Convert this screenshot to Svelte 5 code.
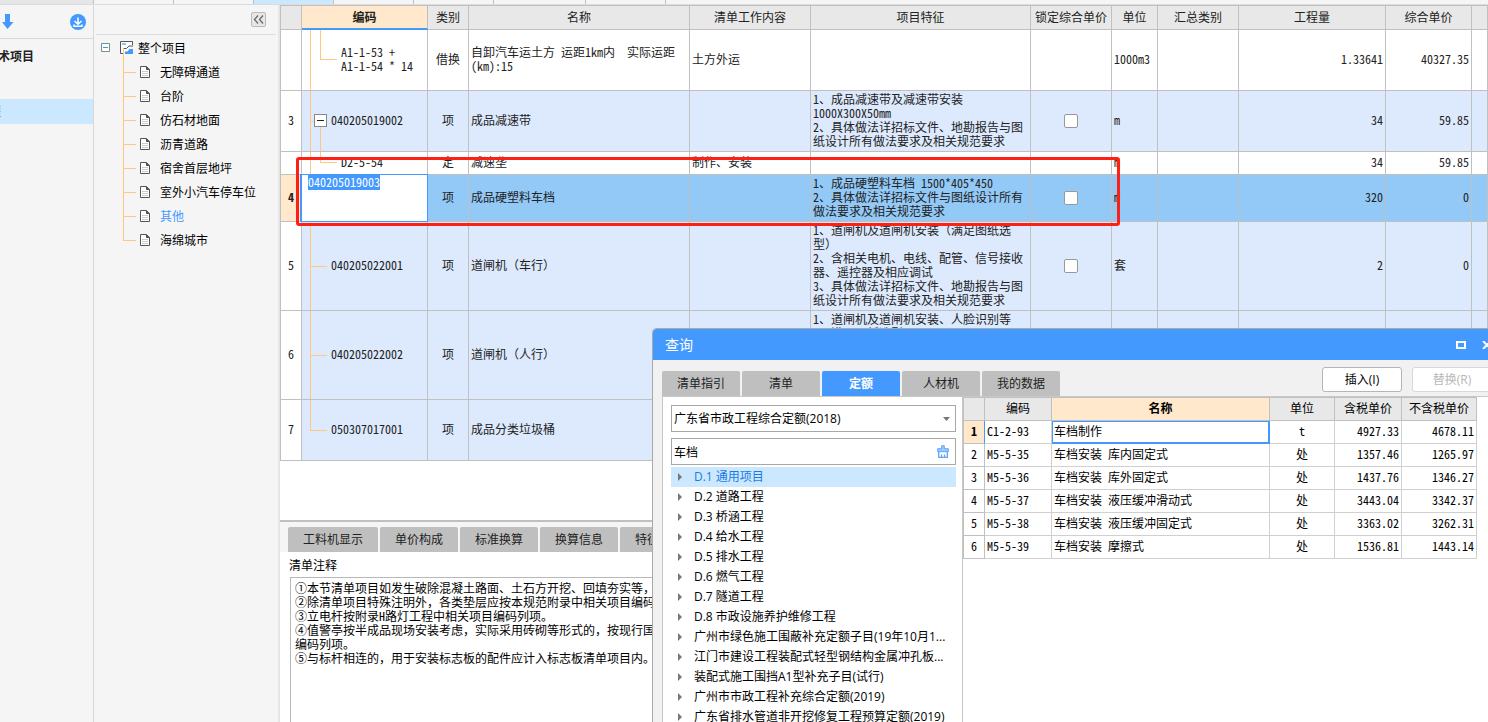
<script lang="ts">
	import { onMount } from 'svelte';

	type Row = {
		no: string;
		code: string;
		kind: string;
		name: string;
		work?: string;
		feature?: string;
		check?: boolean;
		unit?: string;
		qty?: string;
		price?: string;
		style: string;
	};

	const sections = ['无障碍通道', '台阶', '仿石材地面', '沥青道路', '宿舍首层地坪', '室外小汽车停车位', '其他', '海绵城市'];
	const columns = ['类别', '名称', '清单工作内容', '项目特征', '锁定综合单价', '单位', '汇总类别', '工程量', '综合单价', ''];

	const rows: Row[] = [
		{ no: '', code: 'A1-1-53 +\nA1-1-54 * 14', kind: '借换', name: '自卸汽车运土方 运距1km内  实际运距\n(km):15', work: '土方外运', unit: '1000m3', qty: '1.33641', price: '40327.35', style: 'sub h61' },
		{ no: '3', code: '040205019002', kind: '项', name: '成品减速带', feature: '1、成品减速带及减速带安装\n1000X300X50mm\n2、具体做法详招标文件、地勘报告与图\n纸设计所有做法要求及相关规范要求', check: true, unit: 'm', qty: '34', price: '59.85', style: 'item parent h61' },
		{ no: '', code: 'D2-5-54', kind: '定', name: '减速垄', work: '制作、安装', unit: 'm', qty: '34', price: '59.85', style: 'sub h23' },
		{ no: '4', code: '040205019003', kind: '项', name: '成品硬塑料车档', feature: '1、成品硬塑料车档 1500*405*450\n2、具体做法详招标文件与图纸设计所有\n做法要求及相关规范要求', check: true, unit: 'm', qty: '320', price: '0', style: 'item active h47' },
		{ no: '5', code: '040205022001', kind: '项', name: '道闸机（车行）', feature: '1、道闸机及道闸机安装（满足图纸选\n型）\n2、含相关电机、电线、配管、信号接收\n器、遥控器及相应调试\n3、具体做法详招标文件、地勘报告与图\n纸设计所有做法要求及相关规范要求', check: true, unit: '套', qty: '2', price: '0', style: 'item h89' },
		{ no: '6', code: '040205022002', kind: '项', name: '道闸机（人行）', feature: '1、道闸机及道闸机安装、人脸识别等\n2、满足图纸选型', style: 'item top h89' },
		{ no: '7', code: '050307017001', kind: '项', name: '成品分类垃圾桶', style: 'item last h61' }
	];

	const detailTabs = ['工料机显示', '单价构成', '标准换算', '换算信息', '特征及内容'];
	const notes = [
		'①本节清单项目如发生破除混凝土路面、土石方开挖、回填夯实等，',
		'②除清单项目特殊注明外，各类垫层应按本规范附录中相关项目编码列项。',
		'③立电杆按附录H路灯工程中相关项目编码列项。',
		'④值警亭按半成品现场安装考虑，实际采用砖砌等形式的，按现行国家',
		'编码列项。',
		'⑤与标杆相连的，用于安装标志板的配件应计入标志板清单项目内。'
	].join('\n');

	const queryTabs = ['清单指引', '清单', '定额', '人材机', '我的数据'];
	const chapters = [
		'D.1 通用项目',
		'D.2 道路工程',
		'D.3 桥涵工程',
		'D.4 给水工程',
		'D.5 排水工程',
		'D.6 燃气工程',
		'D.7 隧道工程',
		'D.8 市政设施养护维修工程',
		'广州市绿色施工围蔽补充定额子目(19年10月1...',
		'江门市建设工程装配式轻型钢结构金属冲孔板...',
		'装配式施工围挡A1型补充子目(试行)',
		'广州市市政工程补充综合定额(2019)',
		'广东省排水管道非开挖修复工程预算定额(2019)'
	];
	const quotas = [
		['C1-2-93', '车档制作', 't', '4927.33', '4678.11'],
		['M5-5-35', '车档安装 库内固定式', '处', '1357.46', '1265.97'],
		['M5-5-36', '车档安装 库外固定式', '处', '1437.76', '1346.27'],
		['M5-5-37', '车档安装 液压缓冲滑动式', '处', '3443.04', '3342.37'],
		['M5-5-38', '车档安装 液压缓冲固定式', '处', '3363.02', '3262.31'],
		['M5-5-39', '车档安装 摩擦式', '处', '1536.81', '1443.14']
	];

	let keyword = $state('车档');
	let activeCode = $state('040205019003');
	let queryTab = $state('定额');

	onMount(() => {
		const editor = document.querySelector<HTMLTextAreaElement>('#code-editor');
		editor?.focus();
		editor?.select();
	});
</script>

<div class="app">
	<div class="strip">
		<span class="pad"></span>
		<span class="w80"></span><span class="w80"></span><span class="w80 on"></span><span class="w80"></span>
		<span class="w80"></span><span class="w92"></span><span class="w80"></span>
	</div>

	<aside class="projects">
		<div class="tools">
			<button class="icon-btn" aria-label="下移">
				<svg width="12" height="16" viewBox="0 0 12 16"><path d="M3 0h5v8h3.500L5.500 15 0 8h3z" fill="#4499ff" /></svg>
			</button>
			<button class="icon-btn" aria-label="下载">
				<svg width="16" height="16" viewBox="0 0 16 16">
					<circle cx="8" cy="8" r="8" fill="#4499ff" />
					<path d="M8 3.500v6.500M4.500 7L8 10.300 11.500 7M4 10.500v1.700h8v-1.700" fill="none" stroke="#fff" stroke-width="1.500" />
				</svg>
			</button>
		</div>
		<h2>术项目</h2>
		<p class="current"><span>程</span></p>
	</aside>

	<nav class="tree">
		<div class="tree-head">
			<button class="collapse" aria-label="收起">
				<svg width="11" height="9" viewBox="0 0 11 9"><path d="M5 .5L1.500 4.500 5 8.500M10 .5L6.500 4.500 10 8.500" fill="none" stroke="#666" stroke-width="1.200" /></svg>
			</button>
		</div>
		<div class="root">
			<svg width="9" height="9" viewBox="0 0 9 9"><path d="M.5.5h8v8h-8z" fill="#fff" stroke="#7d8f88" /><path d="M2 4.500h5" stroke="#2a9fd8" /></svg>
			<svg class="root-icon" width="14" height="14" viewBox="0 0 14 14">
				<path d="M12.500 4V.5H.5v12h3" fill="#fff" stroke="#555" />
				<path d="M2 2h4v2H2z" fill="#8cc4ff" />
				<path d="M3.500 13V7.500h3L9 5h4" fill="none" stroke="#555" />
				<path d="M5 13V10.500h2.500L9.500 8H13v5z" fill="#4499ff" />
			</svg>
			<span>整个项目</span>
		</div>
		<ul>
			{#each sections as section}
				<li class:chosen={section === '其他'}>
					<svg width="10" height="12" viewBox="0 0 10 12">
						<path d="M.5.5h6l3 3v8h-9z" fill="#fff" stroke="#555" /><path d="M6.500.5v3h3z" fill="#555" stroke="#555" />
						<path d="M2 5.500h6M2 7.500h6M2 9.500h6" stroke="#ccc" />
					</svg>
					<a href="#section">{section}</a>
				</li>
			{/each}
		</ul>
	</nav>

	<main>
		<div class="sheet">
			<table class="bill">
				<colgroup>
					<col class="c-no" /><col class="c-code" /><col class="c-kind" /><col class="c-name" /><col class="c-work" /><col class="c-feature" />
					<col class="c-lock" /><col class="c-unit" /><col class="c-sum" /><col class="c-qty" /><col class="c-price" /><col />
				</colgroup>
				<thead>
					<tr>
						<th></th>
						<th class="sorted">编码</th>
						{#each columns as column}<th>{column}</th>{/each}
					</tr>
				</thead>
				<tbody>
					{#each rows as row}
						<tr class={row.style}>
							<th>{row.no}</th>
							<td class="code">
								{#if row.no === '4'}
									<textarea id="code-editor" aria-label="编码" spellcheck="false" bind:value={activeCode}></textarea>
								{:else}
									<i class="trunk"></i><i class="branch"></i>
									{#if row.no === '3'}
										<i class="twig"></i>
										<button class="fold" aria-label="折叠"></button>
									{/if}
									{row.code}
								{/if}
							</td>
							<td class="mid">{row.kind}</td>
							<td>{row.name}</td>
							<td>{row.work ?? ''}</td>
							<td class="feature">{row.feature ?? ''}</td>
							<td class="mid">{#if row.check}<input type="checkbox" aria-label="锁定综合单价" />{/if}</td>
							<td>{row.unit ?? ''}</td>
							<td></td>
							<td class="num">{row.qty ?? ''}</td>
							<td class="num">{row.price ?? ''}</td>
							<td></td>
						</tr>
					{/each}
				</tbody>
			</table>
		</div>

		<section class="details">
			<div class="tabs">
				{#each detailTabs as tab}<button>{tab}</button>{/each}
			</div>
			<label for="notes">清单注释</label>
			<textarea id="notes" class="notes" readonly value={notes}></textarea>
		</section>

		<div class="mark"></div>

		<div class="dialog" role="dialog" aria-label="查询">
			<header>
				<h1>查询</h1>
				<button class="icon-btn" aria-label="最大化"><svg width="10" height="8" viewBox="0 0 10 8"><path d="M1 1h8v6H1z" fill="none" stroke="#fff" stroke-width="2" /></svg></button>
				<button class="icon-btn" aria-label="关闭"><svg width="10" height="8" viewBox="0 0 10 8"><path d="M1 0l8 8M9 0L1 8" stroke="#fff" stroke-width="2" /></svg></button>
			</header>
			<div class="bar">
				<div class="tabs">
					{#each queryTabs as tab}
						<button class:on={queryTab === tab} onclick={() => (queryTab = tab)}>{tab}</button>
					{/each}
				</div>
				<div class="actions">
					<button>插入(I)</button>
					<button disabled>替换(R)</button>
				</div>
			</div>
			<div class="body">
				<div class="lib">
					<div class="field">
						<select aria-label="定额库"><option>广东省市政工程综合定额(2018)</option></select>
						<svg class="caret" width="7" height="4" viewBox="0 0 7 4"><path d="M0 0h7L3.500 4z" fill="#777" /></svg>
					</div>
					<div class="field">
						<input type="text" aria-label="关键字" bind:value={keyword} />
						<svg class="broom" width="12" height="13" viewBox="0 0 12 13">
							<path d="M4.700.7h2.600v3h4v3H.7v-3h4z" fill="#9cc8ff" stroke="#5ba5fb" /><path d="M1.700 7v5.300h8.600V7M4.500 12V9.500M7.500 12V9.500" fill="none" stroke="#5ba5fb" stroke-width="1.300" />
						</svg>
					</div>
					<ul>
						{#each chapters as chapter, i}
							<li class:chosen={i === 0}>
								<svg width="4" height="8" viewBox="0 0 4 8"><path d="M0 0l4 4-4 4z" fill="#777" /></svg>
								<span>{chapter}</span>
							</li>
						{/each}
					</ul>
				</div>
				<div class="result">
					<table class="quota">
						<colgroup>
							<col class="q-no" /><col class="q-code" /><col class="q-name" /><col class="q-unit" /><col class="q-tax" /><col class="q-net" />
						</colgroup>
						<thead>
							<tr><th></th><th>编码</th><th class="sorted">名称</th><th>单位</th><th>含税单价</th><th>不含税单价</th></tr>
						</thead>
						<tbody>
							{#each quotas as [code, name, unit, tax, net], i}
								<tr class:active={i === 0}>
									<th>{i + 1}</th>
									<td>{code}</td>
									<td class="q-cell">{name}</td>
									<td class="mid">{unit}</td>
									<td class="num">{tax}</td>
									<td class="num">{net}</td>
								</tr>
							{/each}
						</tbody>
					</table>
				</div>
			</div>
		</div>
	</main>
</div>

<style>
	.app {
		--ui: 'Open Sans', 'Noto Sans CJK SC', sans-serif;
		--grid: 'Noto Sans Mono CJK SC', 'Noto Sans CJK SC', sans-serif;
		display: grid;
		grid-template-columns: 94px 186px 1fr;
		grid-template-rows: 5px 1fr;
		height: 100vh;
		overflow: hidden;
		background: #f5f5f5;
		color: #000;
		font: 12px/14px var(--ui);
	}

	button,
	input,
	select,
	textarea {
		font: inherit;
		color: inherit;
		box-sizing: border-box;
	}

	ul {
		list-style: none;
		margin: 0;
		padding: 0;
	}

	.icon-btn {
		display: flex;
		padding: 0;
		border: 0;
		background: none;
	}

	.strip {
		grid-column: 1 / -1;
		display: flex;
		border-bottom: 1px solid #dcdcdc;
	}

	.strip span {
		box-sizing: border-box;
		border-right: 1px solid #c0c0c0;
	}

	.strip .pad {
		width: 94px;
		background: #e6e6e6;
	}

	.w80 {
		width: 80px;
	}

	.w92 {
		width: 92px;
	}

	.strip .on {
		background: #cce8ff;
	}

	.projects {
		border-right: 1px solid #d8d8d8;
		overflow: hidden;
	}

	.tools {
		display: flex;
		justify-content: space-between;
		align-items: center;
		height: 33px;
		padding: 0 7px 0 2px;
		border-bottom: 1px solid #d8d8d8;
	}

	.projects h2 {
		margin: 11px 0 35px -2px;
		font-size: 12px;
		line-height: 14px;
		color: #222;
	}

	.current {
		display: flex;
		justify-content: flex-start;
		margin: 0;
		height: 25px;
		line-height: 25px;
		background: #cce8ff;
		color: #1a73d9;
	}

	.current span {
		margin-left: -11px;
	}

	.tree {
		border-right: 2px solid #e6e6e6;
	}

	.tree-head {
		display: flex;
		justify-content: flex-end;
		align-items: center;
		height: 29px;
		margin: 0 2px;
		padding-right: 10px;
		border-bottom: 1px solid #dcdcdc;
	}

	.collapse {
		display: flex;
		align-items: center;
		justify-content: center;
		width: 15px;
		height: 15px;
		padding: 0;
		border: 1px solid #bbb;
		border-radius: 2px;
		background: #e6e6e6;
	}

	.root {
		display: flex;
		align-items: center;
		height: 25px;
		padding-left: 7px;
	}

	.root-icon {
		margin: 0 4px 0 10px;
	}

	.root span,
	.tree a {
		padding-top: 2px;
	}

	.tree li {
		display: flex;
		align-items: center;
		position: relative;
		height: 24px;
		padding-left: 46px;
		gap: 10px;
	}

	.tree li::before {
		content: '';
		position: absolute;
		left: 29px;
		top: -12px;
		width: 12px;
		height: 24px;
		border: solid #ffc77f;
		border-width: 0 0 1px 1px;
	}

	.tree a {
		color: inherit;
		text-decoration: none;
	}

	.tree .chosen {
		color: #4499ff;
	}

	main {
		position: relative;
		display: flex;
		flex-direction: column;
		min-width: 0;
		overflow: hidden;
	}

	.sheet {
		flex: 1;
		background: #fff;
		overflow: hidden;
	}

	table {
		table-layout: fixed;
		border-spacing: 0;
		font: 12px/14px var(--grid);
		color: #222;
	}

	th,
	td {
		box-sizing: border-box;
		padding: 0 2px 2px;
		border: solid #c0c0c0;
		border-width: 0 1px 1px 0;
		white-space: pre;
		overflow: hidden;
	}

	th {
		font-weight: 400;
		text-align: center;
	}

	thead th {
		background: #e8e8e8;
	}

	tbody th {
		background: #fff;
	}

	.bill {
		width: 100%;
		border: solid #c0c0c0;
		border-width: 1px 0 0 1px;
	}

	.c-no { width: 21px; }
	.c-code { width: 126px; }
	.c-kind { width: 41px; }
	.c-name { width: 221px; }
	.c-work { width: 121px; }
	.c-feature { width: 220px; }
	.c-lock { width: 81px; }
	.c-unit { width: 46px; }
	.c-sum { width: 81px; }
	.c-qty { width: 147px; }
	.c-price { width: 86px; }

	.bill thead tr { height: 24px; }
	.h23 { height: 23px; }
	.h47 { height: 47px; }
	.h61 { height: 61px; }
	.h89 { height: 89px; }

	.sorted {
		background: #ffe8cb;
		font-weight: 700;
	}

	.bill .sorted {
		padding-bottom: 0;
		border-bottom: 2px solid #4499ff;
	}

	.item td {
		background: #ddeafe;
	}

	.top .feature {
		padding-top: 1px;
		vertical-align: top;
	}

	.active th {
		background: #ffe8cb;
		font-weight: 700;
	}

	.bill .active td {
		background: #93c9f7;
	}

	.mid {
		text-align: center;
	}

	.num {
		text-align: right;
	}

	.code {
		position: relative;
		padding-left: 29px;
		white-space: pre-line;
	}

	.sub .code {
		padding-left: 39px;
	}

	.code i {
		position: absolute;
		box-sizing: border-box;
		border: 0 solid #ffc77f;
	}

	.trunk {
		left: 8px;
		top: 0;
		bottom: -1px;
		border-left-width: 1px !important;
	}

	.last .trunk {
		bottom: 50%;
	}

	.branch {
		left: 8px;
		top: 50%;
		width: 17px;
		border-top-width: 1px !important;
	}

	.parent .branch {
		width: 5px;
	}

	.sub .branch {
		left: 18px;
		top: 0;
		bottom: 50%;
		border-width: 0 0 1px 1px !important;
	}

	.twig {
		left: 18px;
		top: 50%;
		bottom: -1px;
		border-left-width: 1px !important;
	}

	.fold {
		position: absolute;
		left: 12px;
		top: calc(50% - 7px);
		width: 13px;
		height: 13px;
		padding: 0;
		border: 1px solid #888;
		background: linear-gradient(#222, #222) center / 7px 1px no-repeat #fff;
	}

	.bill .active .code {
		padding: 0;
		overflow: visible;
	}

	#code-editor {
		position: absolute;
		inset: -1px -1px -1px -2px;
		padding: 0 6px;
		border: 1px solid #4499ff;
		border-left-width: 2px;
		outline: 0;
		resize: none;
		overflow: hidden;
		background: #fff;
	}

	#code-editor::selection {
		background: #4499ff;
		color: #fff;
	}

	input[type='checkbox'] {
		appearance: none;
		display: inline-block;
		width: 14px;
		height: 14px;
		margin: 0;
		border: 1px solid #999;
		border-radius: 2px;
		background: #fff;
		vertical-align: middle;
	}

	.details {
		display: flex;
		flex-direction: column;
		height: 202px;
		box-sizing: border-box;
		border-top: 2px solid #c0c0c0;
		background: #fff;
		font-family: var(--grid);
	}

	.tabs {
		display: flex;
		gap: 2px;
		font-family: var(--ui);
	}

	.tabs button {
		min-width: 78px;
		height: 25px;
		padding: 0 15px;
		border: 0;
		border-radius: 2px 2px 0 0;
		background: #bfbfbf;
		color: #222;
		white-space: nowrap;
	}

	.tabs .on {
		background: #4499ff;
		color: #fff;
		font-weight: 700;
	}

	.details .tabs {
		padding: 5px 8px 0;
		background: #f5f5f5;
	}

	.details label {
		margin: 6px 9px 5px;
	}

	.notes {
		flex: 1;
		margin: 0 0 0 10px;
		padding: 3px 4px;
		border: 1px solid #b8b8b8;
		border-bottom: 0;
		outline: 0;
		resize: none;
		white-space: pre;
		overflow: hidden;
	}

	.mark {
		position: absolute;
		left: 16px;
		top: 152px;
		width: 824px;
		height: 69px;
		box-sizing: border-box;
		border: 3px solid #ff2015;
		border-radius: 3px;
		pointer-events: none;
	}

	.dialog {
		position: absolute;
		left: 372px;
		top: 323px;
		right: -12px;
		bottom: 0;
		display: flex;
		flex-direction: column;
		border: 1px solid #a8a8a8;
		border-width: 1px 0 0 1px;
		border-radius: 5px 0 0 0;
		overflow: hidden;
		background: #f1f1f1;
	}

	.dialog header {
		display: flex;
		align-items: center;
		gap: 16px;
		height: 31px;
		padding: 0 8px 0 12px;
		background: #4499ff;
		color: #fff;
	}

	.dialog h1 {
		flex: 1;
		margin: 0;
		font-size: 14px;
		font-weight: 400;
	}

	.bar {
		display: flex;
		justify-content: space-between;
		align-items: flex-end;
		height: 36px;
		margin-left: 9px;
		border-bottom: 1px solid #c8c8c8;
	}

	.actions {
		display: flex;
		gap: 10px;
		padding: 0 8px 4px 0;
	}

	.actions button {
		width: 80px;
		height: 25px;
		padding: 0;
		border: 1px solid #b5b5b5;
		border-radius: 3px;
		background: #fff;
	}

	.actions button:disabled {
		border-color: #d8d8d8;
		color: #b8b8b8;
	}

	.body {
		flex: 1;
		display: flex;
		min-height: 0;
		margin-left: 9px;
		border-left: 1px solid #c8c8c8;
		background: #fff;
	}

	.lib {
		width: 300px;
		box-sizing: border-box;
		padding: 8px 6px 0 8px;
		border-right: 1px solid #c8c8c8;
		overflow: hidden;
	}

	.field {
		position: relative;
		display: flex;
		margin-bottom: 6px;
	}

	.field + ul {
		margin-top: -4px;
	}

	.field input,
	.field select {
		appearance: none;
		width: 100%;
		height: 27px;
		padding: 0 2px;
		border: 1px solid #a8a8a8;
		border-radius: 0;
		background: #fff;
	}

	.caret {
		position: absolute;
		right: 6px;
		top: 12px;
	}

	.broom {
		position: absolute;
		right: 7px;
		top: 7px;
	}

	.lib li {
		display: flex;
		align-items: center;
		gap: 12px;
		height: 20px;
		padding-left: 7px;
		white-space: nowrap;
	}

	.lib .chosen {
		background: #cce8ff;
		color: #1a7be8;
	}

	.quota {
		width: 514px;
		border: solid #c0c0c0;
		border-width: 1px 0 0 1px;
		color: #000;
	}

	.quota tr {
		height: 23px;
	}

	.quota td {
		border-color: #d0d0d0;
	}

	.q-no { width: 21px; }
	.q-code { width: 67px; }
	.q-name { width: 218px; }
	.q-unit { width: 65px; }
	.q-tax { width: 67px; }
	.q-net { width: 75px; }

	.quota .active th {
		border-right-color: #4499ff;
	}

	.quota .active .q-cell {
		border-color: #4499ff;
		box-shadow: inset 0 0 0 1px #4499ff;
	}
</style>
